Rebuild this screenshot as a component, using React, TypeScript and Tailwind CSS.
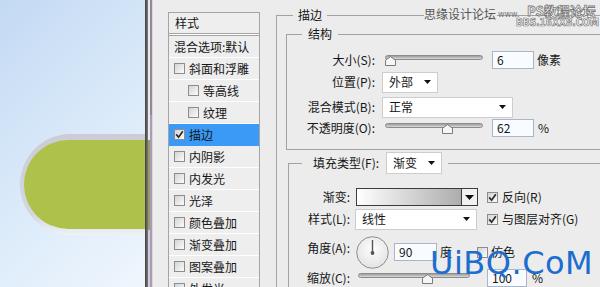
import React from 'react';

const cjk = "font-['Noto_Sans_CJK_SC','Noto_Sans',sans-serif]";

const Check = ({ on = false }: { on?: boolean }) => (
  <span className="w-[11px] h-[11px] shrink-0 border border-[#8d8d8d] bg-[linear-gradient(135deg,#d4d4d4,#fbfbfb)] flex items-center justify-center">
    {on && (
      <svg width="9" height="9" viewBox="0 0 9 9">
        <path d="M1.2 4.4 L3.6 7.2 L7.8 1.2" fill="none" stroke="#2a2a2a" strokeWidth="1.7" />
      </svg>
    )}
  </span>
);

const Tri = ({ big = false }: { big?: boolean }) =>
  big ? (
    <svg width="9" height="5" viewBox="0 0 9 5"><path d="M0 0 H9 L4.5 5 Z" fill="#111" /></svg>
  ) : (
    <svg width="7" height="4" viewBox="0 0 7 4"><path d="M0 0 H7 L3.5 4 Z" fill="#111" /></svg>
  );

const Slider = ({ className, thumb }: { className: string; thumb: string }) => (
  <div className={'relative h-[14px] shrink-0 ' + className}>
    <div className="absolute left-0 right-0 top-[2px] h-[5px] rounded-full border border-[#8c8c8c] bg-[linear-gradient(#9c9c9c,#dadada)]" />
    <svg className={'absolute top-[3px] ' + thumb} width="11" height="10" viewBox="0 0 11 10">
      <path d="M0.5 9.5 V4.2 L5.5 0.6 L10.5 4.2 V9.5 Z" fill="#f6f6f6" stroke="#7a7a7a" />
    </svg>
  </div>
);

const Field = ({ className, children }: { className: string; children: React.ReactNode }) => (
  <div className={'h-[18px] border border-[#aab6c4] bg-[#f8fbff] pl-[4px] flex items-center shrink-0 ' + className}>
    {children}
  </div>
);

const Select = ({ className, children }: { className: string; children: React.ReactNode }) => (
  <div className={'h-[21px] border border-[#cdcdcd] bg-white px-[6px] flex items-center justify-between shrink-0 ' + className}>
    <span>{children}</span>
    <Tri />
  </div>
);

const styles = [
  { label: '斜面和浮雕' },
  { label: '等高线', indent: true },
  { label: '纹理', indent: true },
  { label: '描边', on: true },
  { label: '内阴影' },
  { label: '内发光' },
  { label: '光泽' },
  { label: '颜色叠加' },
  { label: '渐变叠加' },
  { label: '图案叠加' },
  { label: '外发光' },
];

export default function App() {
  return (
    <div className={'relative w-[600px] h-[287px] overflow-hidden flex bg-[#ececec] text-[12px] text-[#161616] ' + cjk}>
      {/* canvas */}
      <div className="w-[145px] shrink-0 overflow-hidden pt-[134px] pl-[20px] bg-[linear-gradient(135deg,#c3d9f3_0%,#dcebfa_55%,#eff6fd_100%)]">
        <div className="h-[101px] w-[140px] rounded-l-[51px] pt-[6px] pb-[6px] pl-[4px] bg-[linear-gradient(#cbccd5,#d5d7de_80%,#eef2f7)]">
          <div className="h-full rounded-l-[46px] bg-[#adc14b]" />
        </div>
      </div>
      <div className="w-[3px] shrink-0 bg-gradient-to-r from-[#3e3e3e] to-[#7c7c7c]" />
      <div className="w-[2px] shrink-0 flex flex-col">
        <div className="h-[140px] bg-[#ebe8ef]" />
        <div className="h-[90px] bg-[#9a9963]" />
        <div className="flex-1 bg-[#d3c9dc]" />
      </div>
      <div className="w-[2px] shrink-0 flex flex-col">
        <div className="h-[115px] bg-[#8e8a96]" />
        <div className="flex-1 bg-[#a89cb8]" />
      </div>
      <div className="w-[1px] shrink-0 bg-[#d9d9d9]" />

      {/* dialog */}
      <div className="flex-1 flex">
        <div className="ml-[15px] mt-[12px] w-[92px] h-[300px] shrink-0 border border-[#a4a4a4] bg-[#eeeeee]">
          <div className="h-[20px] pl-[6px] flex items-center">样式</div>
          <div className="h-[3px] border-y border-[#a4a4a4] bg-white" />
          <div className="h-[22px] pl-[5px] flex items-center border-b border-white whitespace-nowrap">混合选项:默认</div>
          {styles.map((s) => (
            <div
              key={s.label}
              className={
                'h-[22px] flex items-center gap-[4px] border-b ' +
                (s.indent ? 'pl-[19px] ' : 'pl-[5px] ') +
                (s.on ? 'bg-[#3a9af6] border-[#3a9af6]' : 'border-white')
              }
            >
              <Check on={s.on} />
              <span>{s.label}</span>
            </div>
          ))}
        </div>

        <div className="ml-[16px] w-[380px] shrink-0">
          <fieldset className="mt-[7px] h-[320px] border-l border-t border-[#a2a2a2]">
            <legend className="ml-[16px] px-[5px] leading-[16px]">描边</legend>

            <fieldset className="ml-[9px] mt-[3px] h-[124px] border-l border-t border-b border-[#a2a2a2]">
              <legend className="ml-[15px] px-[6px] leading-[16px]">结构</legend>
              <div className="mt-[7px] h-[22px] flex items-center">
                <div className="w-[88px] text-right">大小(S):</div>
                <Slider className="ml-[10px] w-[98px]" thumb="left-0" />
                <Field className="ml-[9px] w-[42px]">6</Field>
                <span className="ml-[3px]">像素</span>
              </div>
              <div className="h-[22px] flex items-center">
                <div className="w-[88px] text-right">位置(P):</div>
                <Select className="ml-[7px] w-[56px]">外部</Select>
              </div>
              <div className="mt-[3px] h-[22px] flex items-center">
                <div className="w-[88px] text-right">混合模式(B):</div>
                <Select className="ml-[7px] w-[131px]">正常</Select>
              </div>
              <div className="h-[20px] flex items-center">
                <div className="w-[88px] text-right">不透明度(O):</div>
                <Slider className="ml-[10px] w-[98px]" thumb="left-[57px]" />
                <Field className="ml-[9px] w-[42px]">62</Field>
                <span className="ml-[4px]">%</span>
              </div>
            </fieldset>

            <fieldset className="ml-[11px] mt-[2px] h-[200px] border-l border-t border-[#a2a2a2]">
              <legend className="ml-[13px] pl-[11px] pr-[6px]">
                <span className="flex items-center h-[22px]">
                  <span>填充类型(F):</span>
                  <Select className="ml-[7px] w-[56px] h-[22px]">渐变</Select>
                </span>
              </legend>
              <div className="mt-[13px] h-[20px] flex items-center">
                <div className="w-[61px] text-right">渐变:</div>
                <div className="ml-[6px] w-[122px] h-[18px] border border-[#3c3c3c] flex shrink-0">
                  <div className="flex-1 bg-gradient-to-r from-white to-[#adadad]" />
                  <div className="w-[16px] border-l border-[#3c3c3c] bg-[#f2f2f2] flex items-center justify-center">
                    <Tri big />
                  </div>
                </div>
                <span className="ml-[9px]"><Check on /></span>
                <span className="ml-[4px]">反向(R)</span>
              </div>
              <div className="mt-[1px] h-[22px] flex items-center">
                <div className="w-[61px] text-right">样式(L):</div>
                <Select className="ml-[5px] w-[122px]">线性</Select>
                <span className="ml-[10px]"><Check on /></span>
                <span className="ml-[4px]">与图层对齐(G)</span>
              </div>
              <div className="mt-[4px] h-[36px] flex items-center">
                <div className="w-[61px] text-right pb-[8px]">角度(A):</div>
                <svg className="ml-[6px] shrink-0" width="33" height="33" viewBox="0 0 33 33">
                  <defs>
                    <radialGradient id="dial" cx="50%" cy="40%" r="60%">
                      <stop offset="0" stopColor="#ffffff" />
                      <stop offset="1" stopColor="#e2e2e2" />
                    </radialGradient>
                  </defs>
                  <circle cx="16.5" cy="16.5" r="15.8" fill="url(#dial)" stroke="#8e8e8e" />
                  <line x1="16.5" y1="17" x2="16.5" y2="4" stroke="#555" strokeWidth="1.4" />
                  <circle cx="16.5" cy="17" r="1.9" fill="#555" />
                </svg>
                <Field className="ml-[5px] w-[43px]">90</Field>
                <span className="ml-[3px]">度</span>
                <span className="ml-[25px]"><Check /></span>
                <span className="ml-[3px]">仿色</span>
              </div>
              <div className="mt-[1px] h-[14px] flex items-center">
                <div className="w-[61px] text-right">缩放(C):</div>
                <Slider className="ml-[8px] w-[112px]" thumb="left-[64px]" />
                <Field className="ml-[17px] w-[40px]">100</Field>
                <span className="ml-[5px]">%</span>
              </div>
            </fieldset>
          </fieldset>
        </div>
      </div>

      {/* watermarks */}
      <span className="absolute left-[424px] top-[6px] whitespace-nowrap bg-[#ececec] text-[#555] leading-[16px] pr-[1px]">思缘设计论坛</span>
      <span className="absolute left-[498px] top-[11px] whitespace-nowrap text-[8px] leading-none text-[#777] font-['DejaVu_Sans',sans-serif]">www.</span>
      <span className="absolute left-[527px] top-[3px] whitespace-nowrap text-[13px] leading-[15px] text-white [-webkit-text-stroke:0.8px_#7a7a7a] font-bold">PS教程论坛</span>
      <span className="absolute left-[516px] top-[18px] whitespace-nowrap text-[10px] leading-[10px] text-white [-webkit-text-stroke:0.7px_#7a7a7a] font-['DejaVu_Sans_Condensed','DejaVu_Sans',sans-serif] font-bold">BBS.16XX8.COM</span>
      <div className="absolute left-[430px] top-[247px] whitespace-nowrap text-[32px] tracking-[0.5px] leading-none text-[#1b6dd0] font-['DejaVu_Sans',sans-serif]">
        UiBQ.CoM
      </div>
    </div>
  );
}
